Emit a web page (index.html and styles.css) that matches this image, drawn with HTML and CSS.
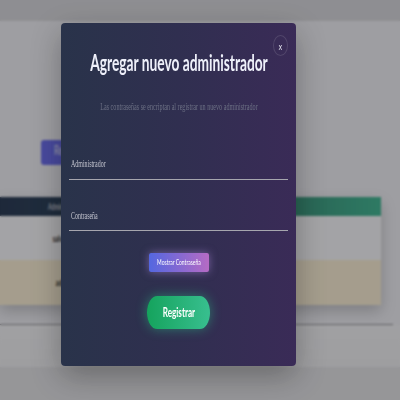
FILE: index.html
```html
<!DOCTYPE html>
<html lang="es">
<head>
<meta charset="utf-8">
<title>Administradores</title>
<link rel="stylesheet" href="styles.css">
</head>
<body>
<div class="page">
  <header class="topbar"></header>
  <main class="content">
    <button class="add-btn"><span class="sq sq-left">Registrar</span></button>
    <table class="admins">
      <thead>
        <tr>
          <th><span class="sq">Administrador</span></th>
          <th><span class="sq">Acciones</span></th>
        </tr>
      </thead>
      <tbody>
        <tr class="row-a">
          <td><span class="sq">salvador</span></td>
          <td><span class="sq">Eliminar</span></td>
        </tr>
        <tr class="row-b">
          <td><span class="sq">admin</span></td>
          <td><span class="sq">Eliminar</span></td>
        </tr>
      </tbody>
    </table>
  </main>
  <hr class="divider">
  <section class="after"></section>
  <footer class="foot"></footer>
</div>

<div class="overlay">
  <div class="modal">
    <button class="close"><span>x</span></button>
    <h2 class="title"><span class="sq">Agregar nuevo administrador</span></h2>
    <p class="sub"><span class="sq">Las contraseñas se encriptan al registrar un nuevo administrador</span></p>
    <div class="field first"><span class="sq sq-left">Administrador</span></div>
    <div class="field second"><span class="sq sq-left">Contraseña</span></div>
    <button class="show-btn"><span class="sq">Mostrar Contraseña</span></button>
    <button class="submit"><span class="sq">Registrar</span></button>
  </div>
</div>
</body>
</html>
```
FILE: styles.css
```css
html, body {
  margin: 0;
  padding: 0;
}

body {
  width: 400px;
  height: 400px;
  overflow: hidden;
  font-family: Lato, "Liberation Sans", sans-serif;
  background: #f0f0f5;
}

.sq {
  display: inline-block;
  white-space: nowrap;
  transform: scaleX(0.625);
  transform-origin: center;
}

.sq-left {
  transform-origin: left center;
}

.page {
  display: flex;
  flex-direction: column;
}

.topbar {
  height: 21px;
  background: #d8d8dc;
}

.content {
  display: flex;
  flex-direction: column;
  align-items: flex-start;
  padding-top: 119px;
  height: 184px;
  background: #f2f2f7;
}

.add-btn {
  box-sizing: border-box;
  margin-left: 41px;
  width: 80px;
  height: 25px;
  border: none;
  border-radius: 3px;
  background: #6466f0;
  color: #e8e8ff;
  font: 400 13px/12px Lato, sans-serif;
  text-align: left;
  padding: 0 0 5px 13px;
  overflow: hidden;
  display: flex;
  align-items: center;
}

.admins {
  margin-top: 32px;
  width: 381px;
  border-collapse: collapse;
  box-shadow: 0 6px 14px rgba(0, 0, 0, 0.22);
  table-layout: fixed;
}

.admins th {
  height: 19px;
  padding: 0;
  font: 400 8.5px Lato, sans-serif;
  color: #e6e8f0;
  text-align: center;
  white-space: nowrap;
}

.admins thead tr {
  background: linear-gradient(90deg, #1d2f4a 0%, #234058 40%, #2f8e72 75%, #38b68f 100%);
}

.admins th:nth-child(1),
.admins td:nth-child(1) {
  width: 128px;
}

.admins td {
  padding: 0;
  text-align: center;
  font: 700 9.5px Lato, sans-serif;
  color: #111;
  white-space: nowrap;
}

.row-a td {
  height: 44px;
  background: #fbfbfd;
}

.row-b td {
  height: 45px;
  background: #fdf1d4;
}

.divider {
  margin: 0;
  width: 393px;
  height: 0;
  border: none;
  border-top: 1.5px solid #8c8c90;
  box-shadow: 0 -8px 14px rgba(0, 0, 0, 0.06);
}

.after {
  height: 42px;
  background: linear-gradient(180deg, #f6f6f8, #f2f2f4);
}

.foot {
  height: 40px;
  background: #e4e4e7;
}

/* overlay + modal */

.overlay {
  position: fixed;
  inset: 0;
  background: rgba(32, 32, 36, 0.4);
  backdrop-filter: blur(1px);
  display: flex;
  align-items: flex-start;
  justify-content: flex-start;
  padding: 23px 0 0 61px;
}

.modal {
  position: relative;
  box-sizing: border-box;
  width: 235px;
  height: 343px;
  padding: 28px 8px 0;
  border-radius: 4px;
  background: linear-gradient(90deg, #29334a 0%, #302f50 50%, #3a2b57 100%);
  box-shadow: 0 10px 30px rgba(0, 0, 0, 0.3);
  display: flex;
  flex-direction: column;
  align-items: center;
}

.close {
  position: absolute;
  top: 12px;
  right: 8px;
  width: 15px;
  height: 21px;
  padding: 0;
  border: 1px solid rgba(255, 255, 255, 0.12);
  border-radius: 50%;
  background: transparent;
  color: #e4e4ee;
  font: 400 8px/21px "DejaVu Sans", sans-serif;
  display: flex;
  align-items: center;
  justify-content: center;
}

.close span {
  display: inline-block;
  transform: scaleX(0.8);
  margin-top: 3px;
}

.title {
  margin: 0;
  height: 24px;
  display: flex;
  justify-content: center;
  font: 700 22px/24px Lato, sans-serif;
  color: #eef0fa;
}

.sub {
  margin: 26px 0 0;
  height: 12px;
  display: flex;
  justify-content: center;
  font: 400 9.8px/12px "Liberation Serif", serif;
  color: #6c7084;
}

.field {
  align-self: stretch;
  box-sizing: border-box;
  height: 21.5px;
  padding: 1px 0 0 2px;
  border-bottom: 1.5px solid #a6a6ae;
  font: 400 9.5px/10px "Liberation Serif", serif;
  color: #c4c5cf;
}

.field.first {
  margin-top: 45px;
}

.field.second {
  margin-top: 30px;
}

.show-btn {
  margin-top: 22px;
  width: 60px;
  height: 19px;
  padding: 0;
  border: none;
  border-radius: 2px;
  background: linear-gradient(90deg, #5467e0, #b56bc4);
  box-shadow: 0 0 8px rgba(190, 150, 240, 0.5);
  color: #fff;
  font: 400 8px/19px Lato, sans-serif;
  display: flex;
  justify-content: center;
}

.submit {
  margin-top: 24px;
  width: 63px;
  height: 33px;
  padding: 0;
  border: none;
  border-radius: 10px / 16.5px;
  background: linear-gradient(90deg, #15a35d, #38bf8f);
  box-shadow: 0 0 12px rgba(40, 210, 140, 0.45);
  color: #fff;
  font: 700 13px/33px Lato, sans-serif;
  display: flex;
  justify-content: center;
}
```
